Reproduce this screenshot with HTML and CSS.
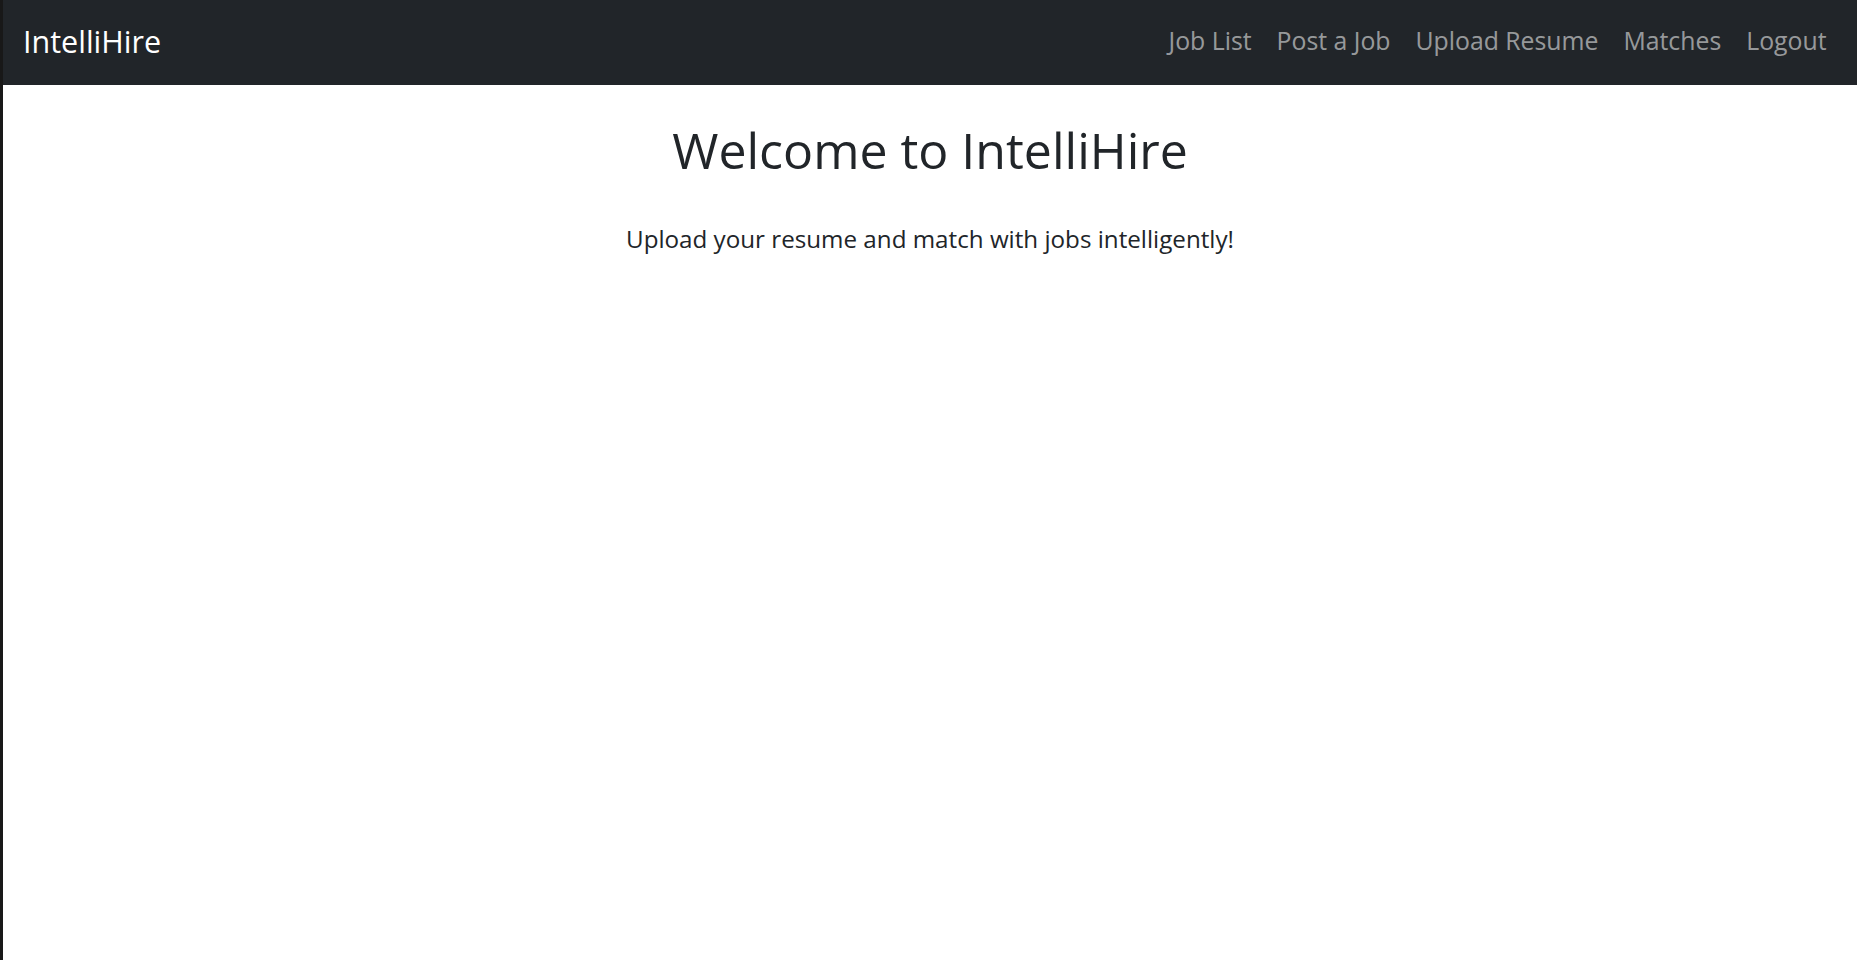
FILE: index.html
```html
<!DOCTYPE html>
<html lang="en">
<head>
<meta charset="utf-8">
<title>IntelliHire</title>
<link rel="stylesheet" href="styles.css">
</head>
<body>
<div class="frame">
  <nav class="navbar">
    <a class="brand" href="#">IntelliHire</a>
    <ul class="nav">
      <li><a class="nav-link" href="#">Job List</a></li>
      <li><a class="nav-link" href="#">Post a Job</a></li>
      <li><a class="nav-link" href="#">Upload Resume</a></li>
      <li><a class="nav-link" href="#">Matches</a></li>
      <li><a class="nav-link" href="#">Logout</a></li>
    </ul>
  </nav>
  <main class="content">
    <h2 class="title">Welcome to IntelliHire</h2>
    <p class="lead">Upload your resume and match with jobs intelligently!</p>
  </main>
</div>
</body>
</html>
```

FILE: styles.css
```css
html, body {
  margin: 0;
  padding: 0;
  height: 100%;
  background: #ffffff;
}

body {
  font-family: "Open Sans", "Noto Sans", sans-serif;
  color: #212529;
}

.frame {
  min-height: 100%;
  border-left: 3px solid #181818;
  box-sizing: border-box;
}

.navbar {
  height: 85px;
  background: #212529;
  display: flex;
  align-items: center;
  justify-content: space-between;
  padding: 0 18px 0 20px;
  box-sizing: border-box;
}

.brand {
  color: #ffffff;
  text-decoration: none;
  font-size: 30.5px;
  line-height: 1;
  padding-bottom: 3px;
}

.nav {
  list-style: none;
  margin: 0;
  padding: 0;
  display: flex;
  align-items: center;
}

.nav-link {
  display: block;
  padding: 0 12.5px 5px;
  color: rgba(255, 255, 255, 0.55);
  text-decoration: none;
  font-size: 24.8px;
  line-height: 1;
}

.content {
  text-align: center;
  padding-top: 35px;
}

.title {
  margin: 0;
  font-size: 50px;
  font-weight: 400;
  line-height: 1.2;
  color: #212529;
}

.lead {
  margin: 41px 0 0;
  font-size: 24.2px;
  font-weight: 400;
  line-height: 1.5;
  color: #212529;
}
```
